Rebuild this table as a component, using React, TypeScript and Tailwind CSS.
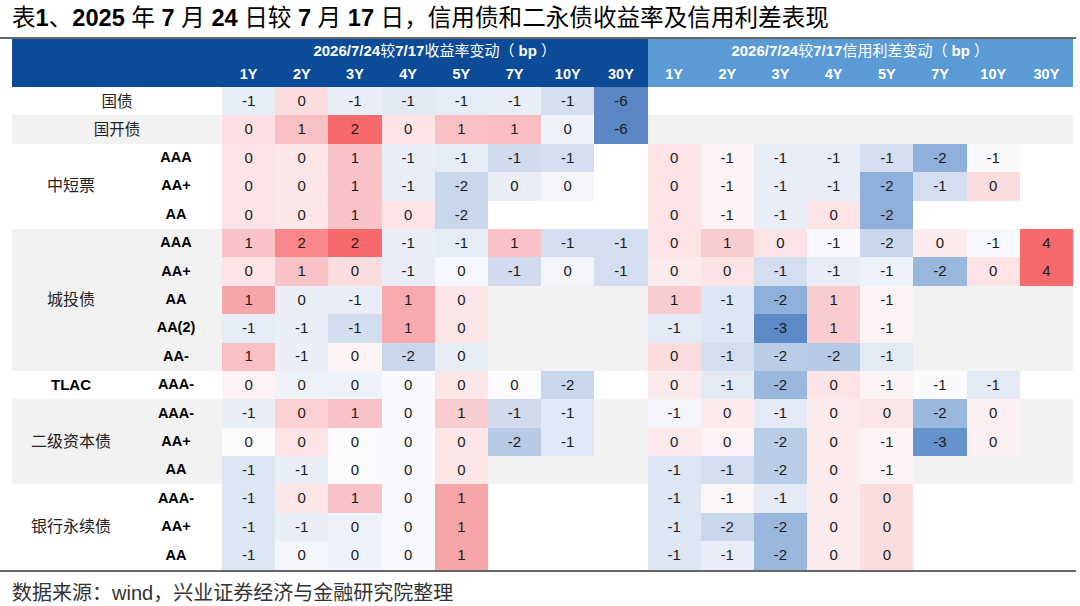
import React from 'react';

type Cell = [number, string] | null;

interface Row {
  rating?: string;
  left: Cell[];
  right: Cell[];
}

interface Group {
  name: string;
  bold?: boolean;
  gray?: boolean;
  wide?: boolean;
  rows: Row[];
}

const YEARS = ['1Y', '2Y', '3Y', '4Y', '5Y', '7Y', '10Y', '30Y'];

const groups: Group[] = [
  {
    name: '国债',
    wide: true,
    rows: [
      {
        left: [
          [-1, '#e7edf7'], [0, '#fbdcdf'], [-1, '#e8edf7'], [-1, '#e3e9f4'],
          [-1, '#e6ecf6'], [-1, '#e8edf7'], [-1, '#d5dff0'], [-6, '#5b87c5'],
        ],
        right: [],
      },
    ],
  },
  {
    name: '国开债',
    wide: true,
    gray: true,
    rows: [
      {
        left: [
          [0, '#fcdfe2'], [1, '#f9c0c4'], [2, '#f8696b'], [0, '#fde4e6'],
          [1, '#f9c0c4'], [1, '#f9bdc1'], [0, '#eef2fa'], [-6, '#5b87c5'],
        ],
        right: [],
      },
    ],
  },
  {
    name: '中短票',
    rows: [
      {
        rating: 'AAA',
        left: [
          [0, '#fce3e5'], [0, '#fce6e8'], [1, '#f9c3c7'], [-1, '#e8edf7'],
          [-1, '#e6ecf6'], [-1, '#d0dcee'], [-1, '#d3dff0'], null,
        ],
        right: [
          [0, '#fce3e5'], [-1, '#fcf3f5'], [-1, '#e8edf7'], [-1, '#e8edf7'],
          [-1, '#d3dff0'], [-2, '#8fb0da'], [-1, '#fafafd'], null,
        ],
      },
      {
        rating: 'AA+',
        left: [
          [0, '#fce3e5'], [0, '#fce6e8'], [1, '#f9c3c7'], [-1, '#e8edf7'],
          [-2, '#c8d7ec'], [0, '#e9eef7'], [0, '#f3f5fb'], null,
        ],
        right: [
          [0, '#fce3e5'], [-1, '#fcf3f5'], [-1, '#e8edf7'], [-1, '#e8edf7'],
          [-2, '#8fb0da'], [-1, '#d3dff0'], [0, '#fbdde0'], null,
        ],
      },
      {
        rating: 'AA',
        left: [
          [0, '#fce3e5'], [0, '#fce6e8'], [1, '#f9c3c7'], [0, '#fce3e5'],
          [-2, '#c8d7ec'], null, null, null,
        ],
        right: [
          [0, '#fce3e5'], [-1, '#fcf3f5'], [-1, '#e8edf7'], [0, '#fce3e5'],
          [-2, '#8fb0da'], null, null, null,
        ],
      },
    ],
  },
  {
    name: '城投债',
    gray: true,
    rows: [
      {
        rating: 'AAA',
        left: [
          [1, '#f9c3c7'], [2, '#f8868a'], [2, '#f8696b'], [-1, '#e8edf7'],
          [-1, '#e6ecf6'], [1, '#f9c3c7'], [-1, '#d3dff0'], [-1, '#d3dff0'],
        ],
        right: [
          [0, '#fce3e5'], [1, '#f9cccf'], [0, '#fce3e5'], [-1, '#f8f9fc'],
          [-2, '#c8d7ec'], [0, '#fcebed'], [-1, '#f8f9fc'], [4, '#f8696b'],
        ],
      },
      {
        rating: 'AA+',
        left: [
          [0, '#fce3e5'], [1, '#f9c3c7'], [0, '#fbdde0'], [-1, '#e8edf7'],
          [0, '#f5f7fc'], [-1, '#d0dcee'], [0, '#f3f5fb'], [-1, '#d3dff0'],
        ],
        right: [
          [0, '#fcebed'], [0, '#fce3e5'], [-1, '#d3dff0'], [-1, '#e8edf7'],
          [-1, '#eef2fa'], [-2, '#9ab8de'], [0, '#fce3e5'], [4, '#f8696b'],
        ],
      },
      {
        rating: 'AA',
        left: [
          [1, '#f8a5a9'], [0, '#e9eef7'], [-1, '#e8edf7'], [1, '#f8a9ad'],
          [0, '#fce5e7'], null, null, null,
        ],
        right: [
          [1, '#f9cccf'], [-1, '#dde6f3'], [-2, '#8fb0da'], [1, '#f9cccf'],
          [-1, '#fcf3f5'], null, null, null,
        ],
      },
      {
        rating: 'AA(2)',
        left: [
          [-1, '#e6ecf6'], [-1, '#e9eef7'], [-1, '#d2ddef'], [1, '#f8a9ad'],
          [0, '#fce5e7'], null, null, null,
        ],
        right: [
          [-1, '#e3eaf5'], [-1, '#dde6f3'], [-3, '#5b8ac7'], [1, '#f9cccf'],
          [-1, '#fcf3f5'], null, null, null,
        ],
      },
      {
        rating: 'AA-',
        left: [
          [1, '#f9c0c4'], [-1, '#e9eef7'], [0, '#fcf3f5'], [-2, '#c8d7ec'],
          [0, '#e8eef6'], null, null, null,
        ],
        right: [
          [0, '#fbdde0'], [-1, '#d3dff0'], [-2, '#b9cde7'], [-2, '#b7cbe6'],
          [-1, '#e3eaf5'], null, null, null,
        ],
      },
    ],
  },
  {
    name: 'TLAC',
    bold: true,
    rows: [
      {
        rating: 'AAA-',
        left: [
          [0, '#fcf2f3'], [0, '#eef2f9'], [0, '#eef2f9'], [0, '#f8f9fc'],
          [0, '#fce6e8'], [0, '#fbfbfd'], [-2, '#c8d7ec'], null,
        ],
        right: [
          [0, '#fcebed'], [-1, '#e3eaf5'], [-2, '#9ab8de'], [0, '#fce3e5'],
          [-1, '#fcf3f5'], [-1, '#fafafd'], [-1, '#e3eaf5'], null,
        ],
      },
    ],
  },
  {
    name: '二级资本债',
    gray: true,
    rows: [
      {
        rating: 'AAA-',
        left: [
          [-1, '#e9eef7'], [0, '#fbd0d3'], [1, '#f9c3c7'], [0, '#f8f9fc'],
          [1, '#f9ccd0'], [-1, '#d0dcee'], [-1, '#e0e8f5'], null,
        ],
        right: [
          [-1, '#f3f5fb'], [0, '#fcebed'], [-1, '#e3eaf5'], [0, '#fcebed'],
          [0, '#fce5e7'], [-2, '#9ab8de'], [0, '#fcf0f2'], null,
        ],
      },
      {
        rating: 'AA+',
        left: [
          [0, '#fbfbfd'], [0, '#fce3e5'], [0, '#fbfbfd'], [0, '#f8f9fc'],
          [0, '#fce6e8'], [-2, '#b7cbe6'], [-1, '#e0e8f5'], null,
        ],
        right: [
          [0, '#fcebed'], [0, '#fcf3f5'], [-2, '#b9cde7'], [0, '#fcebed'],
          [-1, '#fcf3f5'], [-3, '#6593cb'], [0, '#fcf0f2'], null,
        ],
      },
      {
        rating: 'AA',
        left: [
          [-1, '#dde6f3'], [-1, '#e9eef7'], [0, '#fbfbfd'], [0, '#f8f9fc'],
          [0, '#fce6e8'], null, null, null,
        ],
        right: [
          [-1, '#dde6f3'], [-1, '#d3dff0'], [-2, '#b9cde7'], [0, '#fcebed'],
          [-1, '#fcf3f5'], null, null, null,
        ],
      },
    ],
  },
  {
    name: '银行永续债',
    rows: [
      {
        rating: 'AAA-',
        left: [
          [-1, '#dde6f3'], [0, '#fce6e8'], [1, '#f9c3c7'], [0, '#f8f9fc'],
          [1, '#f8a5a9'], null, null, null,
        ],
        right: [
          [-1, '#dde6f3'], [-1, '#fcf5f6'], [-1, '#e3eaf5'], [0, '#fcebed'],
          [0, '#fbdde0'], null, null, null,
        ],
      },
      {
        rating: 'AA+',
        left: [
          [-1, '#dde6f3'], [-1, '#e9eef7'], [0, '#eef2fa'], [0, '#f8f9fc'],
          [1, '#f8a5a9'], null, null, null,
        ],
        right: [
          [-1, '#dde6f3'], [-2, '#c8d7ec'], [-2, '#9ab8de'], [0, '#fcebed'],
          [0, '#fbdde0'], null, null, null,
        ],
      },
      {
        rating: 'AA',
        left: [
          [-1, '#dde6f3'], [0, '#f3f5fb'], [0, '#eef2fa'], [0, '#f8f9fc'],
          [1, '#f8a5a9'], null, null, null,
        ],
        right: [
          [-1, '#dde6f3'], [-1, '#e8edf7'], [-2, '#9ab8de'], [0, '#fcebed'],
          [0, '#fbdde0'], null, null, null,
        ],
      },
    ],
  },
];

const FONT = { fontFamily: '"Liberation Sans", "Noto Sans CJK SC", sans-serif' };

function HeaderBlock({ title, dark }: { title: string; dark: boolean }) {
  return (
    <div className={`w-[425.5px] flex flex-col text-white ${dark ? 'bg-[#0b4b97]' : 'bg-[#5b9bd5]'}`}>
      <div className="h-[24px] flex items-center justify-center text-[15px] whitespace-pre">
        <span className="font-bold">2026/7/24</span>
        <span>较</span>
        <span className="font-bold">7/17</span>
        <span>{title}（ </span>
        <span className="font-bold">bp</span>
        <span> ）</span>
      </div>
      <div className="h-[24px] grid grid-cols-8 items-center text-[14.5px] font-bold">
        {YEARS.map((y) => (
          <div key={y} className="text-center">
            {y}
          </div>
        ))}
      </div>
    </div>
  );
}

function DataRow({ row, wideName, boldName }: { row: Row; wideName?: string; boldName?: boolean }) {
  const cells = [...fill(row.left), ...fill(row.right)];
  return (
    <div className="flex h-[28.4px]">
      {wideName ? (
        <div className={`w-[210px] flex items-center justify-center text-[15.5px] ${boldName ? 'font-bold' : ''}`}>
          {wideName}
        </div>
      ) : (
        <div className="w-[92px] flex items-center justify-center text-[14.5px] font-bold text-black">
          {row.rating}
        </div>
      )}
      <div className="w-[851px] grid grid-cols-16">
        {cells.map((c, i) =>
          c ? (
            <div
              key={i}
              className="flex items-center justify-center text-[15px] text-[#1a1a1a]"
              style={{ backgroundColor: c[1] }}
            >
              {c[0]}
            </div>
          ) : (
            <div key={i} />
          ),
        )}
      </div>
    </div>
  );
}

function fill(list: Cell[]): Cell[] {
  const out: Cell[] = [];
  for (let i = 0; i < 8; i++) out.push(list[i] ?? null);
  return out;
}

export default function App() {
  return (
    <div className="w-[1080px] h-[606px] bg-white overflow-hidden text-[#222]" style={FONT}>
      {/* Title */}
      <div className="h-[37px] pl-[12px] flex items-center text-[23.6px] text-black whitespace-nowrap">
        <span>表</span>
        <span className="font-bold">1</span>
        <span>、</span>
        <span className="font-bold">2025</span>
        <span>&nbsp;年&nbsp;</span>
        <span className="font-bold">7</span>
        <span>&nbsp;月&nbsp;</span>
        <span className="font-bold">24</span>
        <span>&nbsp;日较&nbsp;</span>
        <span className="font-bold">7</span>
        <span>&nbsp;月&nbsp;</span>
        <span className="font-bold">17</span>
        <span>&nbsp;日，信用债和二永债收益率及信用利差表现</span>
      </div>
      <div className="w-[1076px] h-[2px] bg-[#666]" />

      {/* Table */}
      <div className="ml-[12px] w-[1061px]">
        <div className="flex h-[48px]">
          <div className="w-[210px] bg-[#0b4b97]" />
          <HeaderBlock title="收益率变动" dark />
          <HeaderBlock title="信用利差变动" dark={false} />
        </div>

        {groups.map((g) => (
          <div key={g.name} className={`flex ${g.gray ? 'bg-[#f2f2f2]' : 'bg-white'}`}>
            {g.wide ? (
              <div className="flex flex-col">
                {g.rows.map((r, i) => (
                  <DataRow key={i} row={r} wideName={g.name} boldName={g.bold} />
                ))}
              </div>
            ) : (
              <>
                <div className={`w-[118px] flex items-center justify-center ${g.bold ? 'text-[15px] font-bold text-black' : 'text-[16px]'}`}>
                  {g.name}
                </div>
                <div className="flex flex-col">
                  {g.rows.map((r, i) => (
                    <DataRow key={i} row={r} />
                  ))}
                </div>
              </>
            )}
          </div>
        ))}
      </div>

      <div className="w-[1076px] h-[2px] bg-[#666]" />

      {/* Footer */}
      <div className="pl-[12px] pt-[6px] text-[20px] text-[#333] whitespace-nowrap">
        数据来源：wind，兴业证券经济与金融研究院整理
      </div>
    </div>
  );
}
